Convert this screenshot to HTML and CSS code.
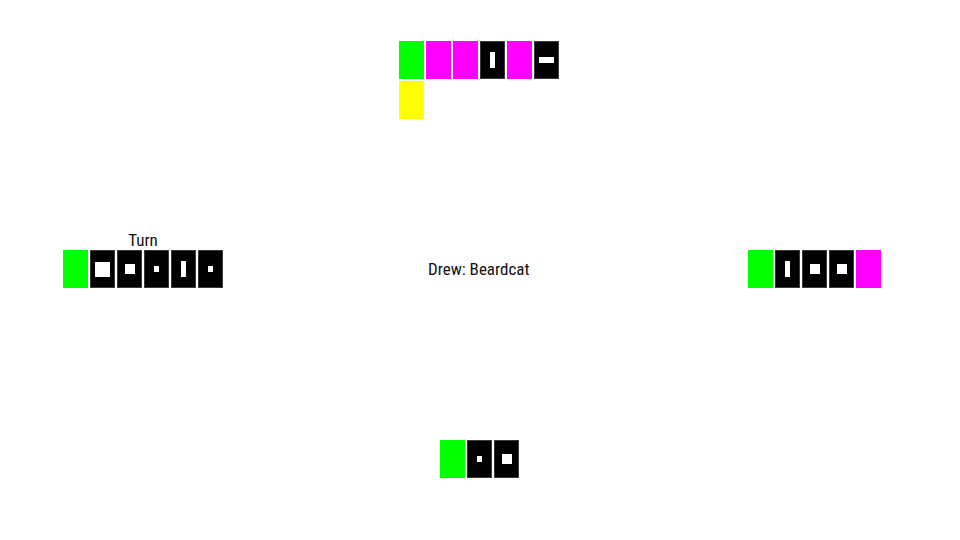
FILE: index.html
```html
<!DOCTYPE html>
<html>
<head>
<meta charset="utf-8">
<link rel="stylesheet" href="styles.css">
</head>
<body>
<div class="table">
  <div class="seat-top">
    <div class="hand hand-top">
      <div class="card green"></div>
      <div class="card magenta"></div>
      <div class="card magenta"></div>
      <div class="card black"><span class="pip vbar"></span></div>
      <div class="card magenta"></div>
      <div class="card black"><span class="pip hbar"></span></div>
      <div class="card yellow"></div>
    </div>
  </div>
  <div class="middle">
    <div class="seat-left">
      <div class="label">Turn</div>
      <div class="hand">
        <div class="card green"></div>
        <div class="card black"><span class="pip big"></span></div>
        <div class="card black"><span class="pip mid"></span></div>
        <div class="card black"><span class="pip dot"></span></div>
        <div class="card black"><span class="pip vbar"></span></div>
        <div class="card black"><span class="pip dot"></span></div>
      </div>
    </div>
    <div class="status">Drew: Beardcat</div>
    <div class="seat-right">
      <div class="hand">
        <div class="card green"></div>
        <div class="card black"><span class="pip vbar"></span></div>
        <div class="card black"><span class="pip mid"></span></div>
        <div class="card black"><span class="pip mid"></span></div>
        <div class="card magenta"></div>
      </div>
    </div>
  </div>
  <div class="seat-bottom">
    <div class="hand">
      <div class="card green"></div>
      <div class="card black"><span class="pip dot"></span></div>
      <div class="card black"><span class="pip mid"></span></div>
    </div>
  </div>
</div>
</body>
</html>
```
FILE: styles.css
```css
html, body {
  margin: 0;
  padding: 0;
  background: #ffffff;
}
body {
  width: 960px;
  height: 540px;
  overflow: hidden;
  font-family: "Roboto", sans-serif;
  font-stretch: 75%;
  color: #111111;
}
.table {
  display: flex;
  flex-direction: column;
}
.hand {
  display: flex;
  gap: 2px;
}
.card {
  width: 25px;
  height: 38px;
  flex: none;
  display: flex;
  align-items: center;
  justify-content: center;
  box-sizing: border-box;
}
.green { background: #00ff00; }
.magenta { background: #ff00ff; }
.yellow { background: #ffff00; }
.black {
  background: #000000;
  box-shadow: inset 0 0 0 1px #3a3a3a;
}
.pip {
  display: block;
  background: #ffffff;
}
.big { width: 15px; height: 15px; }
.mid { width: 10px; height: 10px; }
.dot { width: 5px; height: 6px; }
.vbar { width: 5px; height: 16px; }
.hbar { width: 15px; height: 6px; }

.seat-top {
  padding: 41px 0 0 399px;
}
.hand-top {
  width: 160px;
  flex-wrap: wrap;
  row-gap: 2px;
}
.middle {
  margin-top: 111px;
  padding: 0 79px 0 63px;
  display: grid;
  grid-template-columns: 160px 1fr 133px;
  align-items: end;
}
.seat-left {
  display: flex;
  flex-direction: column;
  align-items: center;
}
.label {
  height: 20px;
  line-height: 20px;
  font-size: 17px;
}
.status {
  height: 38px;
  line-height: 38px;
  font-size: 17px;
  padding-left: 205px;
}
.seat-bottom {
  margin-top: 152px;
  padding-left: 440px;
}
```
